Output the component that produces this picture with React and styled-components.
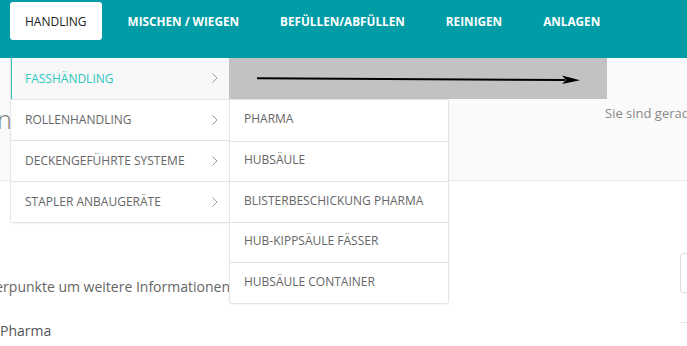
import React from "react";
import styled, { createGlobalStyle } from "styled-components";

const GlobalStyle = createGlobalStyle`
  html, body {
    margin: 0;
    padding: 0;
    background: #fff;
    overflow: hidden;
  }
  body {
    font-family: "Open Sans", "Liberation Sans", Arial, sans-serif;
  }
`;

const tabs = ["HANDLING", "MISCHEN / WIEGEN", "BEFÜLLEN/ABFÜLLEN", "REINIGEN", "ANLAGEN"];

const menu = [
  "FASSHÄNDLING",
  "ROLLENHANDLING",
  "DECKENGEFÜHRTE SYSTEME",
  "STAPLER ANBAUGERÄTE",
];

const subMenu = [
  "PHARMA",
  "HUBSÄULE",
  "BLISTERBESCHICKUNG PHARMA",
  "HUB-KIPPSÄULE FÄSSER",
  "HUBSÄULE CONTAINER",
];

const Chevron = () => (
  <svg width="6" height="10" viewBox="0 0 6 10">
    <polyline points="0.5,0.5 5,5 0.5,9.5" fill="none" stroke="#9a9a9a" strokeWidth="1" />
  </svg>
);

const App = () => {
  return (
    <>
      <GlobalStyle />
      <Page>
        <NavBar>
          {tabs.map((t, idx) => (
            <Tab key={t} active={idx === 0}>
              {t}
              {idx === 0 && (
                <Dropdown>
                  <MenuColumn>
                    {menu.map((m, i) => (
                      <MenuItem key={m} active={i === 0}>
                        <span>{m}</span>
                        <Chevron />
                      </MenuItem>
                    ))}
                  </MenuColumn>
                  <SubMenu>
                    {subMenu.map((s) => (
                      <SubItem key={s}>{s}</SubItem>
                    ))}
                  </SubMenu>
                  {/* marker over the first sub entry */}
                  <Annotation>
                    <svg width="378" height="41" viewBox="0 0 378 41">
                      <line x1="28" y1="20.3" x2="336" y2="22" stroke="#000" strokeWidth="2" />
                      <polygon points="333,17.5 351,22.2 333,26 337,22" fill="#000" />
                    </svg>
                  </Annotation>
                </Dropdown>
              )}
            </Tab>
          ))}
        </NavBar>

        <HeaderBand>
          <Title>Fasshändling</Title>
          <Breadcrumb>Sie sind gerade hier: Handling</Breadcrumb>
        </HeaderBand>

        <Content>
          <TextColumn>
            <Intro>Klicken Sie auf die Markerpunkte um weitere Informationen zu erhalten.</Intro>
            <Label>Pharma</Label>
          </TextColumn>
          <Aside>
            <SelectBox />
            <Rule />
          </Aside>
        </Content>
      </Page>
    </>
  );
};

export default App;

const Page = styled.div`
  width: 687px;
  min-height: 346px;
  overflow: hidden;
`;

const NavBar = styled.nav`
  display: flex;
  align-items: flex-start;
  gap: 11px;
  height: 58px;
  padding: 2px 0 0 10px;
  box-sizing: border-box;
  background: #019ca6;
  position: relative;
  z-index: 5;
`;

const Tab = styled.div`
  position: relative;
  height: 38px;
  padding: 0 15px;
  display: flex;
  align-items: center;
  border-radius: 3px;
  font-size: ${(p) => (p.active ? "12px" : "11.75px")};
  font-weight: ${(p) => (p.active ? 400 : 700)};
  color: ${(p) => (p.active ? "#222" : "#fff")};
  background: ${(p) => (p.active ? "#fff" : "transparent")};
  white-space: nowrap;
  cursor: pointer;
`;

const Dropdown = styled.div`
  position: absolute;
  top: 56px;
  left: 0;
  width: 220px;
  font-size: 12px;
`;

const MenuColumn = styled.div`
  background: #fff;
  border: 1px solid #e4e4e4;
  border-top: none;
  border-radius: 0 0 3px 3px;
  box-shadow: 0 1px 2px rgba(0, 0, 0, 0.05);
`;

const MenuItem = styled.div`
  height: 41px;
  box-sizing: border-box;
  padding: 0 11px 1px 14px;
  display: flex;
  align-items: center;
  justify-content: space-between;
  font-size: 12px;
  font-weight: 400;
  color: ${(p) => (p.active ? "#2fc6c1" : "#666")};
  background: ${(p) => (p.active ? "#f8f8f8" : "#fff")};
  box-shadow: ${(p) => (p.active ? "inset 1px 0 0 #2fc6c1" : "none")};
  & + & {
    border-top: 1px solid #e4e4e4;
  }
`;

const SubMenu = styled.div`
  position: absolute;
  top: 41px;
  left: 219px;
  width: 220px;
  box-sizing: border-box;
  background: #fff;
  border: 1px solid #e4e4e4;
  border-radius: 0 0 3px 3px;
  box-shadow: 0 1px 2px rgba(0, 0, 0, 0.05);
`;

const SubItem = styled.div`
  height: 40.5px;
  box-sizing: border-box;
  padding: 0 14px 3px;
  display: flex;
  align-items: center;
  font-size: 12px;
  color: #666;
  & + & {
    border-top: 1px solid #e4e4e4;
  }
`;

const Annotation = styled.div`
  position: absolute;
  top: 0;
  left: 219px;
  width: 378px;
  height: 41px;
  background: #c3c1c1;
  svg {
    display: block;
  }
`;

const HeaderBand = styled.header`
  display: grid;
  grid-template-columns: 605px 1fr;
  height: 123px;
  box-sizing: border-box;
  background: #fafafa;
  border-bottom: 1px solid #ececec;
`;

const Title = styled.h1`
  margin: 0;
  padding-top: 44px;
  text-indent: -80px;
  font-size: 25px;
  font-weight: 300;
  color: #777;
  white-space: nowrap;
`;

const Breadcrumb = styled.div`
  padding-top: 46px;
  font-size: 13px;
  color: #888;
  white-space: nowrap;
`;

const Content = styled.main`
  display: grid;
  grid-template-columns: 680px 1fr;
`;

const TextColumn = styled.div`
  padding-top: 96px;
  color: #666;
  font-size: 14px;
`;

const Intro = styled.p`
  margin: 0;
  text-indent: -159px;
  white-space: nowrap;
`;

const Label = styled.p`
  margin: 25px 0 0;
  color: #555;
`;

const Aside = styled.aside`
  padding-top: 72px;
`;

const SelectBox = styled.div`
  height: 40px;
  width: 60px;
  box-sizing: border-box;
  border: 1px solid #ddd;
  border-radius: 3px;
  background: #fff;
`;

const Rule = styled.div`
  margin-top: 29px;
  border-top: 1px solid #e6e6e6;
`;
